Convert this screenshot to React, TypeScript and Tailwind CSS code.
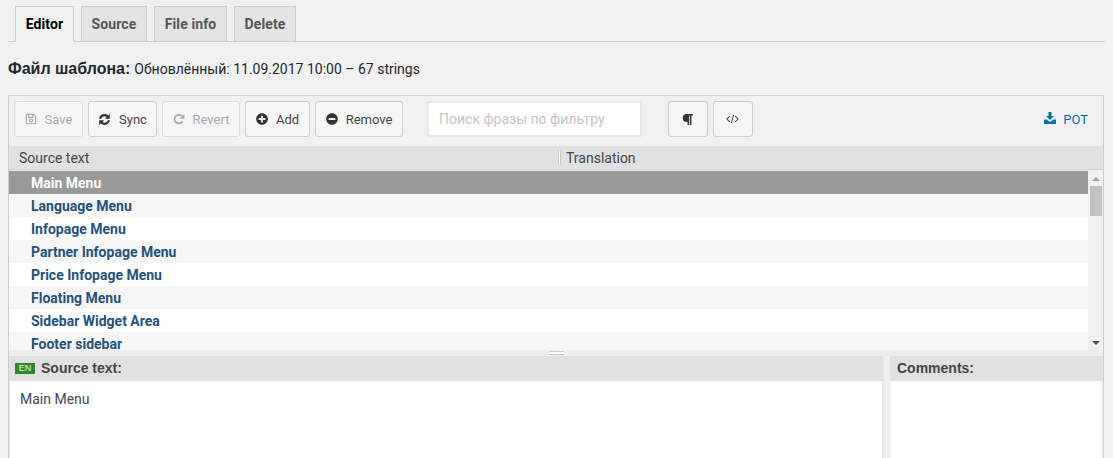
import { FaRegSave, FaPlusCircle, FaMinusCircle, FaParagraph } from "react-icons/fa";
import type { ReactNode } from "react";

const rows = [
  "Main Menu",
  "Language Menu",
  "Infopage Menu",
  "Partner Infopage Menu",
  "Price Infopage Menu",
  "Floating Menu",
  "Sidebar Widget Area",
  "Footer sidebar",
];

function Tab({ label, active, width }: { label: string; active?: boolean; width: string }) {
  return (
    <div
      className={`${width} h-[36px] pt-[1px] flex items-center justify-center border border-[#cccccc] text-[14px] tracking-[0.1px] font-bold ${
        active ? "bg-[#f1f1f1] border-b-[#f1f1f1] text-black" : "bg-[#e4e4e4] text-[#555555]"
      }`}
    >
      {label}
    </div>
  );
}

function ToolButton({
  icon,
  label,
  disabled,
  width,
}: {
  icon: ReactNode;
  label?: string;
  disabled?: boolean;
  width: string;
}) {
  return (
    <button
      type="button"
      className={`${width} h-[36px] flex items-center justify-center gap-[8px] rounded-[3px] border text-[13px] bg-[#f6f6f6] ${
        disabled ? "border-[#dddddd] text-[#aaaaaa]" : "border-[#cccccc] text-[#444444]"
      }`}
    >
      {icon}
      {label && <span className="pt-[1px]">{label}</span>}
    </button>
  );
}

export default function App() {
  return (
    <div className="w-[1113px] h-[458px] overflow-hidden bg-[#f1f1f1] pl-[8px] pr-[8px] pt-[6px] font-['Roboto',sans-serif]">
      <div className="flex gap-[7px] pl-[7px] border-b border-[#cccccc] h-[36px]">
        <Tab label="Editor" active width="w-[59px]" />
        <Tab label="Source" width="w-[66px]" />
        <Tab label="File info" width="w-[73px]" />
        <Tab label="Delete" width="w-[62px]" />
      </div>

      <div className="h-[53px] pt-[1px] flex items-center text-[#23282d]">
        <span className="text-[16px] font-bold mr-[4px] font-['Liberation_Sans',sans-serif]">Файл шаблона:</span>
        <span className="text-[14px]">Обновлённый: 11.09.2017 10:00 – 67 strings</span>
      </div>

      <div className="w-[1096px] h-[400px] border border-[#cccccc] border-b-0">
        <div className="h-[50px] flex items-start pl-[5px] pr-[15px] pt-[5px]">
          <div className="flex gap-[5px]">
            <ToolButton disabled width="w-[69px]" label="Save" icon={<FaRegSave className="w-[12px] h-[12px]" />} />
            <ToolButton
              width="w-[69px]"
              label="Sync"
              icon={
                <svg width="13" height="13" viewBox="0 0 12 12" fill="#333333">
                  <path d="M.9 5.200C1.300 2.700 3.400.9 6 .9c1.300 0 2.500.5 3.400 1.300L10.900.7v4.700H6.200l1.700-1.700C7.400 3.200 6.700 3 6 3 4.600 3 3.400 3.900 3 5.200z" />
                  <path d="M11.100 6.800C10.700 9.300 8.600 11.100 6 11.100c-1.300 0-2.500-.5-3.400-1.300L1.100 11.300V6.600h4.700L4.100 8.300C4.600 8.800 5.300 9 6 9c1.400 0 2.600-.9 3-2.200z" />
                </svg>
              }
            />
            <ToolButton
              disabled
              width="w-[78px]"
              label="Revert"
              icon={
                <svg width="12" height="12" viewBox="0 0 12 12" fill="none">
                  <path d="M9.400 8.600A4.300 4.300 0 1 1 9 3.200" stroke="#aaaaaa" strokeWidth="1.800" />
                  <path d="M11.500 1v4.800H6.700z" fill="#aaaaaa" />
                </svg>
              }
            />
            <ToolButton width="w-[65px]" label="Add" icon={<FaPlusCircle className="w-[12px] h-[12px] text-[#333333]" />} />
            <ToolButton width="w-[88px]" label="Remove" icon={<FaMinusCircle className="w-[12px] h-[12px] text-[#333333]" />} />
          </div>
          <input
            placeholder="Поиск фразы по фильтру"
            className="ml-[24px] w-[215px] h-[36px] bg-white border-2 border-[#e8e8e8] px-[10px] text-[14px] placeholder:text-[#c4c4c4] outline-none"
          />
          <div className="flex gap-[5px] ml-[26px]">
            <ToolButton width="w-[40px]" icon={<FaParagraph className="w-[11px] h-[13px] mr-[2px] text-[#333333]" />} />
            <ToolButton
              width="w-[40px]"
              icon={
                <svg width="13" height="12" viewBox="0 0 14 12" fill="none" stroke="#444444" strokeWidth="1.100" className="mr-[1px]">
                  <path d="M4 3 1 6l3 3M10 3l3 3-3 3M8.200 1.500 5.800 10.500" />
                </svg>
              }
            />
          </div>
          <div className="ml-auto h-[36px] flex items-center gap-[7px] text-[13px] text-[#0073aa]">
            <svg width="12" height="12" viewBox="0 0 12 12" fill="#0073aa" className="mb-[2px]">
              <path d="M4.500 0h3v4H10L6 8 2 4h2.500z" />
              <path d="M0 7.500h2.500L6 10l3.500-2.500H12V12H0z" />
            </svg>
            <span className="pt-[1px]">POT</span>
          </div>
        </div>

        <div className="h-[24px] pt-[1px] flex items-center bg-[#e1e1e1] text-[14px] text-[#444444] border-b border-[#cfcfcf]">
          <div className="w-[549px] pl-[10px]">Source text</div>
          <div className="w-[3px] h-[14px] border-x border-[#c8c8c8] bg-white" />
          <div className="pl-[5px]">Translation</div>
        </div>

        <div className="h-[179px] mt-[1px] flex overflow-hidden">
          <div className="flex-1">
            {rows.map((row, i) => (
              <div
                key={row}
                className={`h-[23px] pt-[1px] flex items-center pl-[22px] text-[14px] font-bold ${
                  i === 0 ? "bg-[#999999] text-white" : i % 2 === 1 ? "bg-[#f6f6f6] text-[#23527c]" : "bg-white text-[#23527c]"
                }`}
              >
                {row}
              </div>
            ))}
          </div>
          <div className="w-[15px] bg-[#f1f1f1] flex flex-col items-center">
            <div className="h-[15px] flex items-center justify-center">
              <div className="w-0 h-0 border-x-[4px] border-x-transparent border-b-[4px] border-b-[#a3a3a3]" />
            </div>
            <div className="w-[12px] h-[30px] bg-[#c1c1c1]" />
            <div className="flex-1" />
            <div className="h-[15px] flex items-center justify-center">
              <div className="w-0 h-0 border-x-[4px] border-x-transparent border-t-[4px] border-t-[#505050]" />
            </div>
          </div>
        </div>

        <div className="h-[6px] bg-[#ededed] flex justify-center">
          <div className="w-[15px] h-[4px] border-y border-[#c8c8c8] bg-white mt-[1px]" />
        </div>

        <div className="flex h-[200px] font-['Liberation_Sans',sans-serif]">
          <div className="w-[875px] border-r-2 border-[#e6e6e6]">
            <div className="h-[25px] flex items-center bg-[#e1e1e1] pl-[6px] text-[14px] font-bold text-[#444444]">
              <span className="w-[20px] h-[11px] mr-[6px] flex items-center justify-center bg-[#2a8a2e] text-[9px] font-normal text-[#e8f5e0]">
                EN
              </span>
              Source text:
            </div>
            <div className="h-full bg-white border-l border-[#e6e6e6] pl-[10px] pt-[8px] text-[14px] text-[#3b4a5c] font-['Roboto',sans-serif]">
              Main Menu
            </div>
          </div>
          <div className="w-[6px]" />
          <div className="flex-1">
            <div className="h-[25px] flex items-center bg-[#e1e1e1] pl-[7px] text-[14px] font-bold text-[#444444]">Comments:</div>
            <div className="h-full bg-white mx-[1px] mr-[2px]" />
          </div>
        </div>
      </div>
    </div>
  );
}
